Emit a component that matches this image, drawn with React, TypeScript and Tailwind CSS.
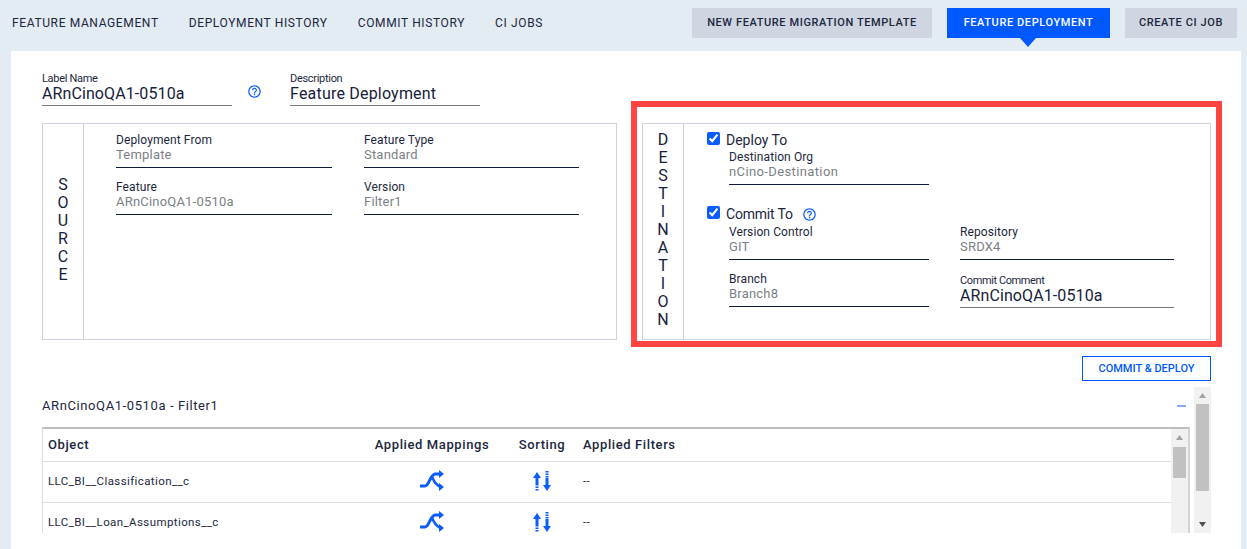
import { MdHelpOutline } from "react-icons/md"

const tabs = ["FEATURE MANAGEMENT", "DEPLOYMENT HISTORY", "COMMIT HISTORY", "CI JOBS"]

const rows = ["LLC_BI__Classification__c", "LLC_BI__Loan_Assumptions__c"]

const ShuffleIcon = () => (
    <svg className="mb-[3px]" width="25" height="25" viewBox="0 0 25 25" fill="none">
        <path d="M0 18 H5 C9 18 10 7 15 6 H21" stroke="#0a5cff" strokeWidth="3" />
        <path d="M12 9 C14 13 16 18 21 19" stroke="#0a5cff" strokeWidth="2.5" />
        <path d="M19 2 L24 6 L19 10 Z M19 15 L24 19 L19 23 Z" fill="#0a5cff" />
    </svg>
)

const SortIcon = () => (
    <svg className="mb-[1px]" width="20" height="22" viewBox="0 0 20 22" fill="none">
        <path d="M1 7 L5 1 L9 7 Z" fill="#0a5cff" />
        <path d="M5 6 V13" stroke="#0a5cff" strokeWidth="3" />
        <path d="M5 13 V20" stroke="#0a5cff" strokeWidth="3" strokeDasharray="1.5 1" />
        <path d="M15 0 V7" stroke="#0a5cff" strokeWidth="3" strokeDasharray="1.5 1" />
        <path d="M15 7 V15" stroke="#0a5cff" strokeWidth="3" />
        <path d="M11 14 L19 14 L15 20 Z" fill="#0a5cff" />
    </svg>
)

const Field = ({ label, value, className = "" }: { label: string; value: string; className?: string }) => (
    <div className={`border-b border-[#101b3c] pb-[4px] ${className}`}>
        <div className="text-[12px] leading-[14px] tracking-[0.1px] text-[#1c2740]">{label}</div>
        <div className="text-[13px] leading-[16px] tracking-[0.2px] text-[#7b7f86]">{value}</div>
    </div>
)

const Scrollbar = ({ className = "", thumb, clipped = false }: { className?: string; thumb: string; clipped?: boolean }) => (
    <div className={`relative w-[17px] shrink-0 bg-[#f1f1f1] ${className}`}>
        <svg className="absolute left-[5px] top-[6px]" width="7" height="5" viewBox="0 0 7 5">
            <path d="M0 5 L3.5 0 L7 5 Z" fill="#a3a3a3" />
        </svg>
        <div className={`absolute left-[2px] right-[2px] bg-[#c1c1c1] ${thumb}`} />
        {!clipped && (
            <svg className="absolute bottom-[6px] left-[5px]" width="7" height="5" viewBox="0 0 7 5">
                <path d="M0 0 L7 0 L3.5 5 Z" fill="#505050" />
            </svg>
        )}
    </div>
)

const VerticalLabel = ({ text, className = "" }: { text: string; className?: string }) => (
    <div className={`flex w-[41px] shrink-0 flex-col items-center justify-center border-r border-[#cdd3dc] ${className}`}>
        {text.split("").map((letter, i) => (
            <span key={i} className="text-[16px] leading-[18px] text-[#16213c]">{letter}</span>
        ))}
    </div>
)

const App = () => {
    return (
        <div className="relative h-[549px] w-[1247px] overflow-hidden bg-[#e3ebf3] font-['Roboto',sans-serif] text-[#16213c]">
            <div className="flex h-[51px] items-start pl-[12px] pr-[10px]">
                <ul className="flex gap-[30px] pt-[15px] text-[12px] leading-[16px] tracking-[0.63px] text-[#1c2740]">
                    {tabs.map((tab) => (
                        <li key={tab}>{tab}</li>
                    ))}
                </ul>
                <div className="ml-auto flex gap-[15px] pt-[8px] text-[11px] font-medium tracking-[0.6px]">
                    <button className="h-[30px] w-[240px] bg-[#cfd6e1] text-[#1c2740]">NEW FEATURE MIGRATION TEMPLATE</button>
                    <button className="relative h-[30px] w-[163px] bg-[#0059ff] text-white">
                        FEATURE DEPLOYMENT
                        <span className="absolute left-[73px] top-[30px] h-0 w-0 border-x-[8px] border-t-[9px] border-x-transparent border-t-[#0059ff]" />
                    </button>
                    <button className="h-[30px] w-[112px] bg-[#cfd6e1] text-[#1c2740]">CREATE CI JOB</button>
                </div>
            </div>

            <div className="relative ml-[11px] mr-[6px] h-[498px] overflow-hidden bg-white pl-[31px] pr-[30px] pt-[20px]">
                <div className="flex">
                    <div className="w-[190px] border-b border-[#777] pb-[4px]">
                        <div className="text-[11px] leading-[15px] tracking-[-0.3px] text-[#1c2740]">Label Name</div>
                        <div className="pt-[1px] text-[16px] leading-[14px] tracking-[0.1px]">ARnCinoQA1-0510a</div>
                    </div>
                    <MdHelpOutline className="ml-[15px] mr-[28px] mt-[13px]" size={15} color="#0a5cff" />
                    <div className="w-[190px] border-b border-[#777] pb-[4px]">
                        <div className="text-[11px] leading-[15px] tracking-[-0.3px] text-[#1c2740]">Description</div>
                        <div className="pt-[1px] text-[16px] leading-[14px] tracking-[0.2px]">Feature Deployment</div>
                    </div>
                </div>

                <div className="mt-[17px] flex h-[217px] gap-[25px]">
                    <div className="flex w-[575px] border border-[#cdd3dc]">
                        <VerticalLabel text="SOURCE" className="pb-[4px]" />
                        <div className="grid h-fit grid-cols-[216px_215px] gap-x-[32px] gap-y-[12px] pl-[32px] pt-[9px]">
                            <Field label="Deployment From" value="Template" />
                            <Field label="Feature Type" value="Standard" />
                            <Field label="Feature" value="ARnCinoQA1-0510a" />
                            <Field label="Version" value="Filter1" />
                        </div>
                    </div>
                    <div className="flex w-[569px] border border-[#cdd3dc]">
                        <VerticalLabel text="DESTINATION" className="pb-[3px]" />
                        <div className="pl-[23px] pt-[8px]">
                            <label className="flex h-[16px] items-center">
                                <input type="checkbox" defaultChecked className="mb-[3px] h-[13px] w-[13px] accent-[#0a5cff]" />
                                <span className="ml-[6px] mt-[1px] text-[14px] text-[#1c2740]">Deploy To</span>
                            </label>
                            <div className="ml-[22px] mt-[2px] w-[200px] border-b border-[#101b3c] pb-[5px]">
                                <div className="text-[12px] leading-[14px] tracking-[0.1px] text-[#1c2740]">Destination Org</div>
                                <div className="text-[13px] leading-[15px] tracking-[0.38px] text-[#7b7f86]">nCino-Destination</div>
                            </div>
                            <label className="mt-[21px] flex h-[16px] items-center">
                                <input type="checkbox" defaultChecked className="mb-[3px] h-[13px] w-[13px] accent-[#0a5cff]" />
                                <span className="ml-[6px] text-[14px] tracking-[-0.2px] text-[#1c2740]">Commit To</span>
                                <MdHelpOutline className="ml-[9px]" size={15} color="#0a5cff" />
                            </label>
                            <div className="ml-[22px] mt-[3px] grid grid-cols-[200px_214px] gap-x-[31px] gap-y-[12px]">
                                <Field label="Version Control" value="GIT" />
                                <Field label="Repository" value="SRDX4" />
                                <Field label="Branch" value="Branch8" />
                                <div className="-mb-[1px] border-b border-[#777] pt-[2px]">
                                    <div className="text-[11px] leading-[13px] tracking-[-0.4px] text-[#1c2740]">Commit Comment</div>
                                    <div className="text-[16px] leading-[18px] tracking-[0.1px]">ARnCinoQA1-0510a</div>
                                </div>
                            </div>
                        </div>
                    </div>
                </div>

                <div className="mt-[16px] flex justify-end">
                    <button className="h-[25px] w-[129px] border border-[#0059ff] pt-[1px] text-[11px] font-medium text-[#0059ff]">COMMIT &amp; DEPLOY</button>
                </div>

                <div className="mt-[6px] flex h-[146px] justify-between">
                    <div className="flex w-[1148px] flex-col">
                        <div className="flex h-[40px] items-center justify-between pb-[3px] pr-[4px]">
                            <span className="text-[13px] tracking-[0.6px] text-[#1c2740]">ARnCinoQA1-0510a - Filter1</span>
                            <span className="h-[2px] w-[9px] bg-[#8aa8ff]" />
                        </div>
                        <div className="flex h-[106px] overflow-hidden border-l border-r-2 border-t-2 border-l-[#ddd] border-r-[#d4d4d4] border-t-[#bdbdbd]">
                            <div className="min-w-0 flex-1">
                                <div className="grid h-[33px] grid-cols-[324px_130px_86px_1fr] items-center border-b border-[#dedede] text-[13px] font-medium tracking-[0.6px] text-[#1c2740]">
                                    <span className="pl-[5px]">Object</span>
                                    <span className="text-center">Applied Mappings</span>
                                    <span className="pl-[4px] text-center">Sorting</span>
                                    <span>Applied Filters</span>
                                </div>
                                {rows.map((name) => (
                                    <div key={name} className="grid h-[41px] grid-cols-[324px_130px_86px_1fr] items-center border-b border-[#dedede] text-[11.5px] tracking-[0.4px] text-[#1c2740]">
                                        <span className="pl-[5px]">{name}</span>
                                        <div className="flex justify-center"><ShuffleIcon /></div>
                                        <div className="flex justify-center pl-[4px]"><SortIcon /></div>
                                        <span>--</span>
                                    </div>
                                ))}
                            </div>
                            <Scrollbar thumb="top-[18px] h-[31px]" clipped />
                        </div>
                    </div>
                    <Scrollbar thumb="top-[17px] h-[87px]" />
                </div>

                {/* red annotation drawn over the destination box */}
                <div className="pointer-events-none absolute left-[620px] top-[50px] h-[246px] w-[591px] border-[6px] border-[#ff4444]" />
            </div>
        </div>
    )
}

export default App
